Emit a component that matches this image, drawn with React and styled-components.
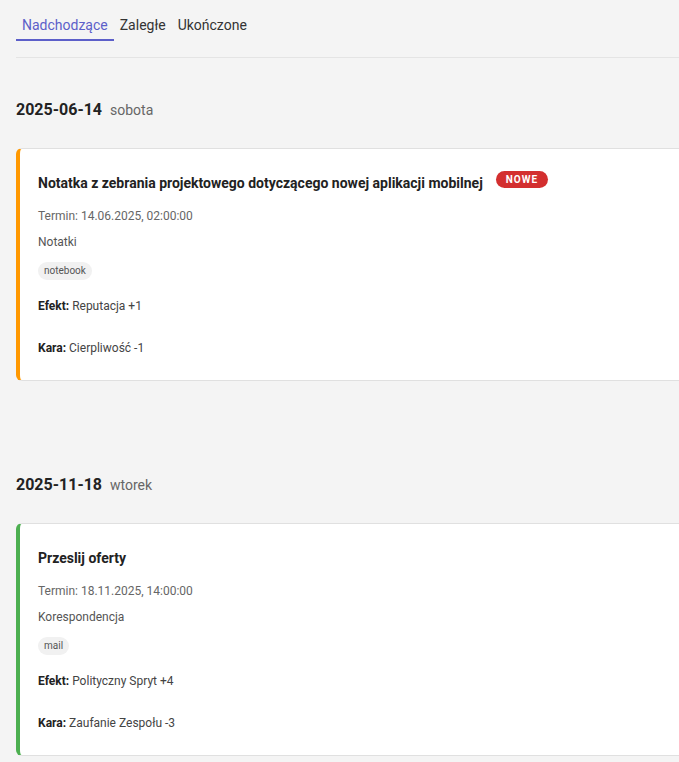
import React from "react";
import styled, { createGlobalStyle } from "styled-components";

const GlobalStyle = createGlobalStyle`
  html, body {
    margin: 0;
    padding: 0;
    background: #f4f4f4;
    overflow: hidden;
  }
  body {
    font-family: Roboto, "Noto Sans", sans-serif;
    color: #222;
  }
`

const Page = styled.div`
  width: 760px;
  padding: 12px 0 0 16px;
`
const Tabs = styled.div`
  display: flex;
  border-bottom: 1px solid #e4e4e4;
  padding-bottom: 16px;
`
const Tab = styled.div`
  padding: 5px 6px 6px;
  font-size: 14px;
  line-height: 16px;
  color: ${props => props.active ? "#5c5fc9" : "#333"};
  border-bottom: 2px solid ${props => props.active ? "#5c5fc9" : "transparent"};
`
const Section = styled.div`
  margin-top: ${props => props.first ? "42px" : "94px"};
`
const DateHeading = styled.div`
  display: flex;
  align-items: baseline;
  gap: 8px;
  height: 24px;
  margin-bottom: 24px;
`
const DateText = styled.span`
  font-size: 16px;
  font-weight: 700;
  color: #222;
`
const DayText = styled.span`
  font-size: 14px;
  color: #666;
`
const Card = styled.div`
  background: #fff;
  border: 1px solid #e0e0e0;
  border-left: 4px solid ${props => props.accent};
  border-radius: 6px;
  padding: 24px 18px 23px;
`
const TitleRow = styled.div`
  display: flex;
  align-items: flex-start;
  gap: 13px;
`
const Title = styled.div`
  font-size: 14px;
  font-weight: 700;
  line-height: 20px;
  color: #222;
`
const Badge = styled.span`
  margin-top: -2px;
  background: #d32f2f;
  color: #fff;
  font-size: 10px;
  font-weight: 700;
  letter-spacing: 1px;
  border-radius: 9px;
  padding: 0 10px;
  line-height: 17px;
`
const Line = styled.div`
  font-size: 12px;
  line-height: 18px;
  color: ${props => props.muted ? "#666" : "#555"};
  margin-top: ${props => props.gap}px;
`
const Tag = styled.span`
  display: inline-block;
  margin-top: 11px;
  background: #f1f1f1;
  color: #555;
  font-size: 10px;
  line-height: 18px;
  padding: 0 6px;
  border-radius: 9px;
`
const Effect = styled.div`
  font-size: 12px;
  line-height: 18px;
  color: #444;
  margin-top: ${props => props.gap}px;
  b {
    color: #222;
    font-weight: 700;
  }
`

const tasks = [
  {
    date: "2025-06-14",
    day: "sobota",
    accent: "#ff9800",
    title: "Notatka z zebrania projektowego dotyczącego nowej aplikacji mobilnej",
    isNew: true,
    due: "Termin: 14.06.2025, 02:00:00",
    category: "Notatki",
    tag: "notebook",
    effect: "Reputacja +1",
    penalty: "Cierpliwość -1",
  },
  {
    date: "2025-11-18",
    day: "wtorek",
    accent: "#4caf50",
    title: "Przeslij oferty",
    isNew: false,
    due: "Termin: 18.11.2025, 14:00:00",
    category: "Korespondencja",
    tag: "mail",
    effect: "Polityczny Spryt +4",
    penalty: "Zaufanie Zespołu -3",
  },
]

const App = () => {
  return (
    <Page>
      <GlobalStyle />
      <Tabs>
        <Tab active>Nadchodzące</Tab>
        <Tab>Zaległe</Tab>
        <Tab>Ukończone</Tab>
      </Tabs>
      {tasks.map((task, i) => (
        <Section key={task.date} first={i === 0}>
          <DateHeading>
            <DateText>{task.date}</DateText>
            <DayText>{task.day}</DayText>
          </DateHeading>
          <Card accent={task.accent}>
            <TitleRow>
              <Title>{task.title}</Title>
              {task.isNew && <Badge>NOWE</Badge>}
            </TitleRow>
            <Line muted gap={14}>{task.due}</Line>
            <Line gap={8}>{task.category}</Line>
            <Tag>{task.tag}</Tag>
            <Effect gap={17}><b>Efekt:</b> {task.effect}</Effect>
            <Effect gap={24}><b>Kara:</b> {task.penalty}</Effect>
          </Card>
        </Section>
      ))}
    </Page>
  )
}

export default App
